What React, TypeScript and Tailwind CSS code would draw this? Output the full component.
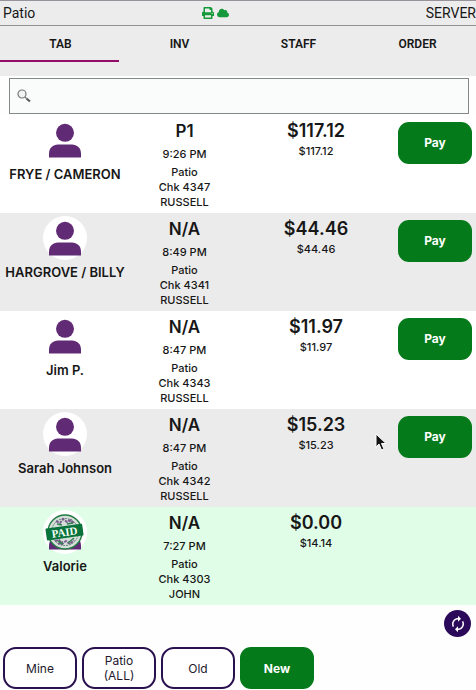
import React from "react";
import { FaPrint, FaCloud } from "react-icons/fa";
import { MdAutorenew } from "react-icons/md";

type Tab = {
  name: string;
  seat: string;
  time: string;
  check: string;
  owner: string;
  due: string;
  total: string;
  paid?: boolean;
};

const tabs: Tab[] = [
  { name: "FRYE / CAMERON", seat: "P1", time: "9:26 PM", check: "Chk 4347", owner: "RUSSELL", due: "$117.12", total: "$117.12" },
  { name: "HARGROVE / BILLY", seat: "N/A", time: "8:49 PM", check: "Chk 4341", owner: "RUSSELL", due: "$44.46", total: "$44.46" },
  { name: "Jim P.", seat: "N/A", time: "8:47 PM", check: "Chk 4343", owner: "RUSSELL", due: "$11.97", total: "$11.97" },
  { name: "Sarah Johnson", seat: "N/A", time: "8:47 PM", check: "Chk 4342", owner: "RUSSELL", due: "$15.23", total: "$15.23" },
  { name: "Valorie", seat: "N/A", time: "7:27 PM", check: "Chk 4303", owner: "JOHN", due: "$0.00", total: "$14.14", paid: true },
];

const sections = ["TAB", "INV", "STAFF", "ORDER"];

function Avatar({ paid }: { paid?: boolean }) {
  return (
    <svg viewBox="0 0 44 44" className="size-11" aria-hidden="true">
      <circle cx="22" cy="22" r="22" fill="#fff" />
      <circle cx="22" cy="14.8" r="9" fill="#612a75" />
      <path d="M6 39.6v-4c0-5.5 4-9.1 9-9.1h14c5 0 9 3.6 9 9.1v4z" fill="#612a75" />
      {paid && (
        <g>
          <circle cx="22" cy="22" r="17" fill="#d5dfd9" stroke="#217a42" strokeWidth="1.4" />
          <circle cx="22" cy="22" r="13.5" fill="none" stroke="#5d8670" strokeWidth="1" strokeDasharray="2 1" />
          <path d="M13 11l4 2 3-4 4 3 4-2 3 4M12 31l4-1 3 4 4-3 4 3 4-4M15 34l5-2M25 10l4 3" fill="none" stroke="#795d8c" strokeWidth="2" strokeDasharray="3 1" />
          <path d="M14 14l5 1M24 14l6-1M15 31l5 3M25 33l6-5" stroke="#358052" strokeWidth="1.5" />
          <g transform="rotate(-8 22 22)">
            <rect x="3" y="16" width="37" height="12" rx="1" fill="#08733a" />
            <text x="21.5" y="26" textAnchor="middle" fill="#f4fff7" className="font-['Liberation_Serif',serif] text-[11px] font-bold">PAID</text>
          </g>
        </g>
      )}
    </svg>
  );
}

function TabRow({ tab }: { tab: Tab }) {
  return (
    <li className={`grid h-[98px] grid-cols-[130fr_109fr_154fr_83fr] text-center ${tab.paid ? "bg-[#e0fde8]" : "odd:bg-white even:bg-[#ebebeb]"}`}>
      <div className="flex flex-col items-center pt-[3px]">
        <Avatar paid={tab.paid} />
        <span className="mt-1 text-[13px] leading-4 font-semibold whitespace-nowrap">{tab.name}</span>
      </div>
      <div className="pt-1 text-[11px] font-medium">
        <div className="text-[17px] leading-6 font-semibold">{tab.seat}</div>
        <div className="pt-px leading-5">{tab.time}</div>
        <div className="leading-[15px]">
          <div className="pt-px">Patio</div>
          <div>{tab.check}</div>
          <div>{tab.owner}</div>
        </div>
      </div>
      <div className="pt-1 font-medium">
        <div className="text-lg leading-6 font-semibold">{tab.due}</div>
        <div className="text-[11px] leading-4">{tab.total}</div>
      </div>
      <div className="pt-[7px] pr-1 pl-[5px]">
        {!tab.paid && (
          <button type="button" className="h-[42px] w-full rounded-[11px] bg-[#047a1b] text-xs font-bold text-white">
            Pay
          </button>
        )}
      </div>
    </li>
  );
}

function Filter({ children }: { children: React.ReactNode }) {
  return (
    <button type="button" className="h-[42px] w-[74px] rounded-[13px] border-2 border-[#29104f] bg-white text-xs leading-[15px] text-[#24182e]">
      {children}
    </button>
  );
}

export default function App() {
  return (
    <main className="relative min-h-screen bg-[#fefefe] font-['Inter','Liberation_Sans',sans-serif] text-[#171717]">
      <header className="bg-[#ececec]">
        <div className="grid h-[26px] grid-cols-[2fr_1fr_3fr] items-center border-y border-t-[#98929a] border-b-[#8e9294] pl-[3px] font-['Roboto','Liberation_Sans',sans-serif] text-sm">
          <span>Patio</span>
          <span className="flex items-center justify-end gap-[3px] pr-[11px] text-[#16993a]">
            <FaPrint size={12} />
            <FaCloud size={12} />
          </span>
          <span className="text-right">SERVER</span>
        </div>
        <nav className="grid h-[50px] grid-cols-4 items-start">
          {sections.map((section, index) => (
            <button
              key={section}
              type="button"
              className={`h-9 border-b-2 pt-0.5 pl-0.5 font-['Roboto','Liberation_Sans',sans-serif] text-xs font-semibold ${index === 0 ? "border-[#930d68]" : "border-transparent"}`}
            >
              {section}
            </button>
          ))}
        </nav>
      </header>

      <div className="flex h-[39px] items-start pt-0.5 pr-[7px] pl-[9px]">
        <label className="flex h-9 w-full items-center border border-[#858888] bg-[#fafbfb] pl-[7px]">
          <svg viewBox="0 0 14 14" className="size-3.5" fill="none" aria-hidden="true">
            <circle cx="5" cy="5" r="4" fill="#f2f4f4" stroke="#777" strokeWidth="1.2" />
            <path d="M8 8l1.5 1.5" stroke="#777" strokeWidth="1.2" />
            <path d="M9.5 9.5L13 12.5" stroke="#5c5c5c" strokeWidth="2.2" />
          </svg>
          <input type="search" aria-label="Search tabs" className="ml-2 min-w-0 flex-1 bg-transparent text-sm outline-none" />
        </label>
      </div>

      <ul>
        {tabs.map((tab) => (
          <TabRow key={tab.name} tab={tab} />
        ))}
      </ul>

      <footer>
        <div className="flex h-[42px] justify-end pt-[5px] pr-[5px]">
          <button type="button" aria-label="Refresh" className="flex size-[27px] items-center justify-center rounded-full bg-[#2c0a5a] text-white">
            <MdAutorenew size={18} />
          </button>
        </div>
        <div className="flex gap-[5px] pl-[3px]">
          <Filter>Mine</Filter>
          <Filter>Patio<br />(ALL)</Filter>
          <Filter>Old</Filter>
          <button type="button" className="h-[42px] w-[74px] rounded-[11px] bg-[#047a1b] pt-0.5 text-xs font-bold text-white">New</button>
        </div>
      </footer>

      <svg viewBox="0 0 12 18" className="absolute top-[433px] left-[375px] h-[18px] w-3" aria-hidden="true">
        <path d="M1 1v13l3-3 2.5 6 2.5-1-2.5-5.5H11z" fill="#151515" stroke="#fff" strokeWidth="1" />
      </svg>
    </main>
  );
}
